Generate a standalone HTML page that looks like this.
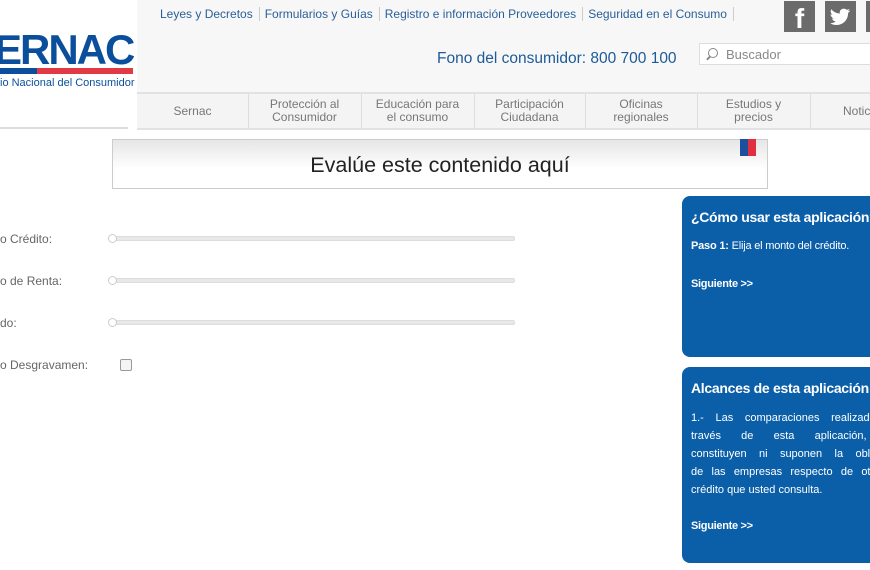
<!DOCTYPE html>
<html><head><meta charset="utf-8"><style>
body{margin:0;width:870px;height:570px;overflow:hidden;background:#fff;font-family:"Liberation Sans",sans-serif;position:relative}
.a{position:absolute}
.top{left:137px;top:0;width:733px;height:92px;background:#f7f7f7}
.tl{top:7px;font-size:12px;color:#2a5f9a;white-space:nowrap}
.tl span{border-right:1px solid #ccc;padding:0 6px 0 5px}
.nav{left:137px;top:92px;width:733px;height:38px;background:#f4f4f4;border-top:2px solid #e2e2e2;border-bottom:2px solid #e2e2e2;box-sizing:border-box}
.nc{position:absolute;top:0;height:34px;border-right:1px solid #ddd;display:flex;align-items:center;justify-content:center;text-align:center;font-size:12px;line-height:13px;color:#777}
.box{left:682px;width:200px;background:#0b5ea8;border-radius:8px;color:#fff;overflow:hidden}
.lab{left:0;font-size:12px;color:#666}
.sl{left:109px;width:404px;height:3px;background:#e8e8e8;border:1px solid #ddd;border-radius:2px}
.kn{left:108px;width:7px;height:7px;border:1px solid #ccc;border-radius:50%;background:#fff}
.jl{white-space:nowrap;text-align:justify;text-align-last:justify;width:208px;height:18px;overflow:hidden}
</style></head><body>
<div class="a" style="left:0;top:0;width:133px;height:128px;background:#fff"></div>
<div class="a" style="left:-6px;top:28px;font-size:42px;font-weight:bold;color:#0b4f9c;letter-spacing:-2px;line-height:44px">ERNAC</div>
<div class="a" style="left:0;top:68px;width:37px;height:6px;background:#0b4f9c"></div>
<div class="a" style="left:37px;top:68px;width:96px;height:6px;background:#e13a45"></div>
<div class="a" style="left:0;top:77px;font-size:11px;color:#0b4f9c;white-space:nowrap">io Nacional del Consumidor</div>
<div class="a" style="left:0;top:127px;width:128px;height:2px;background:#ddd"></div>
<div class="a top"></div>
<div class="a tl" style="left:155px"><span>Leyes y Decretos</span><span>Formularios y Guías</span><span>Registro e información Proveedores</span><span>Seguridad en el Consumo</span></div>
<div class="a" style="left:784px;top:1px;width:31px;height:31px;background:#6b6b6b;color:#fff;font-size:28px;font-weight:bold;text-align:center;line-height:36px;overflow:hidden">f</div>
<div class="a" style="left:825px;top:1px;width:31px;height:31px;background:#6b6b6b">
<svg width="31" height="31" viewBox="0 0 31 31"><path d="M25 9.5c-.8.4-1.6.6-2.4.7.9-.5 1.5-1.300 1.8-2.3-.8.5-1.7.8-2.6 1-.8-.8-1.900-1.3-3-1.3-2.3 0-4.1 1.8-4.1 4.1 0 .3 0 .6.1.9-3.4-.2-6.4-1.8-8.5-4.3-.4.6-.6 1.3-.6 2.1 0 1.4.7 2.7 1.8 3.4-.7 0-1.3-.2-1.900-.5 0 2 1.4 3.7 3.3 4.1-.6.2-1.2.2-1.900.1.5 1.6 2 2.8 3.8 2.9-1.4 1.1-3.2 1.8-5.1 1.8H5.2c1.8 1.2 4 1.8 6.3 1.8 7.5 0 11.6-6.2 11.6-11.6v-.5c.8-.6 1.4-1.3 1.900-2.2z" fill="#fff"/></svg></div>
<div class="a" style="left:866px;top:1px;width:6px;height:31px;background:#6b6b6b"></div>
<div class="a" style="left:437px;top:50px;font-size:15.5px;color:#1c5a98">Fono del consumidor: 800 700 100</div>
<div class="a" style="left:699px;top:43px;width:180px;height:22px;background:#fff;border:1px solid #ddd;font-size:13px;color:#888;line-height:22px;padding-left:26px;box-sizing:border-box">Buscador</div>
<div class="a" style="left:708px;top:48px;width:8px;height:8px;border:1.5px solid #888;border-radius:50%"></div>
<div class="a" style="left:706px;top:57px;width:5px;height:1.5px;background:#888;transform:rotate(-45deg)"></div>
<div class="a nav">
<div class="nc" style="left:0;width:111px">Sernac</div>
<div class="nc" style="left:111px;width:113px">Protección al<br>Consumidor</div>
<div class="nc" style="left:224px;width:113px">Educación para<br>el consumo</div>
<div class="nc" style="left:337px;width:111px">Participación<br>Ciudadana</div>
<div class="nc" style="left:448px;width:112px">Oficinas<br>regionales</div>
<div class="nc" style="left:560px;width:113px">Estudios y<br>precios</div>
<div class="nc" style="left:673px;width:80px;border:0;justify-content:flex-start;padding-left:33px">Noticias</div>
</div>
<div class="a" style="left:112px;top:139px;width:654px;height:48px;border:1px solid #ccc;background:linear-gradient(#e6e6e6,#fff 60%);font-size:21.5px;color:#222;text-align:center;line-height:50px">Evalúe este contenido aquí</div>
<div class="a" style="left:740px;top:139px;width:8px;height:17px;background:#1c4f9c"></div>
<div class="a" style="left:748px;top:139px;width:8px;height:17px;background:#e03040"></div>
<div class="a lab" style="top:232px">o Crédito:</div>
<div class="a lab" style="top:274px">o de Renta:</div>
<div class="a lab" style="top:316px">do:</div>
<div class="a lab" style="top:358px">o Desgravamen:</div>
<div class="a sl" style="top:236px"></div><div class="a kn" style="top:234px"></div>
<div class="a sl" style="top:278px"></div><div class="a kn" style="top:276px"></div>
<div class="a sl" style="top:320px"></div><div class="a kn" style="top:318px"></div>
<div class="a" style="left:120px;top:359px;width:10px;height:10px;border:1px solid #999;border-radius:2px;background:#f4f4f4"></div>
<div class="a box" style="top:196px;height:161px">
<div style="position:absolute;left:9px;top:13px;font-size:14px;font-weight:bold;white-space:nowrap;letter-spacing:-0.3px">¿Cómo usar esta aplicación?</div>
<div style="position:absolute;left:9px;top:44px;font-size:11px;white-space:nowrap;letter-spacing:-0.2px"><b>Paso 1:</b> Elija el monto del crédito.</div>
<div style="position:absolute;left:9px;top:82px;font-size:11px;font-weight:bold;letter-spacing:-0.3px">Siguiente &gt;&gt;</div>
</div>
<div class="a box" style="top:367px;height:196px">
<div style="position:absolute;left:9px;top:13px;font-size:14px;font-weight:bold;white-space:nowrap;letter-spacing:-0.3px">Alcances de esta aplicación</div>
<div style="position:absolute;left:9px;top:42px;font-size:11px;line-height:18px">
<div class="jl">1.- Las comparaciones realizadas a</div>
<div class="jl" style="word-spacing:4px">través de esta aplicación, no</div>
<div class="jl" style="width:214px">constituyen ni suponen la obligación</div>
<div class="jl" style="width:222px">de las empresas respecto de otorgar el</div>
<div style="white-space:nowrap">crédito que usted consulta.</div>
</div>
<div style="position:absolute;left:9px;top:153px;font-size:11px;font-weight:bold;letter-spacing:-0.3px">Siguiente &gt;&gt;</div>
</div>
</body></html>
